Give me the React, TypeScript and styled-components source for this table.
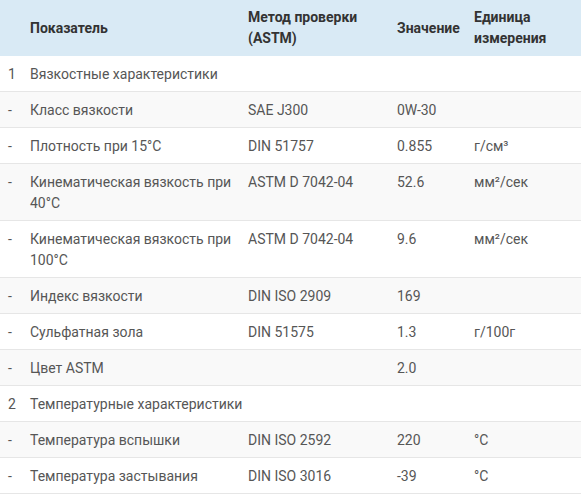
import React from "react";
import styled, { createGlobalStyle } from "styled-components";

const Global = createGlobalStyle`
  html, body { margin: 0; padding: 0; background: #ffffff; }
  body { font-family: Roboto, "Liberation Sans", Arial, sans-serif; }
`;

const Table = styled.table`
  width: 581px;
  border-collapse: collapse;
  table-layout: fixed;
  font-family: Roboto, "Liberation Sans", Arial, sans-serif;
  font-size: 14px;
  color: #565656;
`;

const Col = styled.col<{ $w: number }>`
  width: ${(p) => p.$w}px;
`;

const HeadRow = styled.tr`
  background: #d9eaf5;
`;

const Th = styled.th`
  text-align: left;
  vertical-align: middle;
  font-weight: 700;
  font-size: 14px;
  line-height: 21px;
  color: #333333;
  padding: 7px 8px;
  height: 42px;
`;

const Row = styled.tr<{ $alt: boolean }>`
  background: ${(p) => (p.$alt ? "#f9f9f9" : "#ffffff")};
  border-bottom: 1px solid #e6e6e6;
`;

const Td = styled.td`
  text-align: left;
  vertical-align: top;
  line-height: 21px;
  padding: 8px 8px 6px;
`;

type Item =
  | { kind: "section"; num: string; title: string }
  | { kind: "row"; name: string; method: string; value: string; unit: string };

const items: Item[] = [
  { kind: "section", num: "1", title: "Вязкостные характеристики" },
  { kind: "row", name: "Класс вязкости", method: "SAE J300", value: "0W-30", unit: "" },
  { kind: "row", name: "Плотность при 15°C", method: "DIN 51757", value: "0.855", unit: "г/см³" },
  { kind: "row", name: "Кинематическая вязкость при 40°C", method: "ASTM D 7042-04", value: "52.6", unit: "мм²/сек" },
  { kind: "row", name: "Кинематическая вязкость при 100°C", method: "ASTM D 7042-04", value: "9.6", unit: "мм²/сек" },
  { kind: "row", name: "Индекс вязкости", method: "DIN ISO 2909", value: "169", unit: "" },
  { kind: "row", name: "Сульфатная зола", method: "DIN 51575", value: "1.3", unit: "г/100г" },
  { kind: "row", name: "Цвет ASTM", method: "", value: "2.0", unit: "" },
  { kind: "section", num: "2", title: "Температурные характеристики" },
  { kind: "row", name: "Температура вспышки", method: "DIN ISO 2592", value: "220", unit: "°C" },
  { kind: "row", name: "Температура застывания", method: "DIN ISO 3016", value: "-39", unit: "°C" },
];

export default function App() {
  return (
    <>
      <Global />
      <Table>
        <colgroup>
          <Col $w={22} />
          <Col $w={218} />
          <Col $w={149} />
          <Col $w={77} />
          <Col $w={115} />
        </colgroup>
        <thead>
          <HeadRow>
            <Th></Th>
            <Th>Показатель</Th>
            <Th>Метод проверки (ASTM)</Th>
            <Th>Значение</Th>
            <Th>Единица измерения</Th>
          </HeadRow>
        </thead>
        <tbody>
          {items.map((it, i) =>
            it.kind === "section" ? (
              <Row key={i} $alt={i % 2 === 1}>
                <Td>{it.num}</Td>
                <Td colSpan={4}>{it.title}</Td>
              </Row>
            ) : (
              <Row key={i} $alt={i % 2 === 1}>
                <Td>-</Td>
                <Td>{it.name}</Td>
                <Td>{it.method}</Td>
                <Td>{it.value}</Td>
                <Td>{it.unit}</Td>
              </Row>
            )
          )}
        </tbody>
      </Table>
    </>
  );
}
